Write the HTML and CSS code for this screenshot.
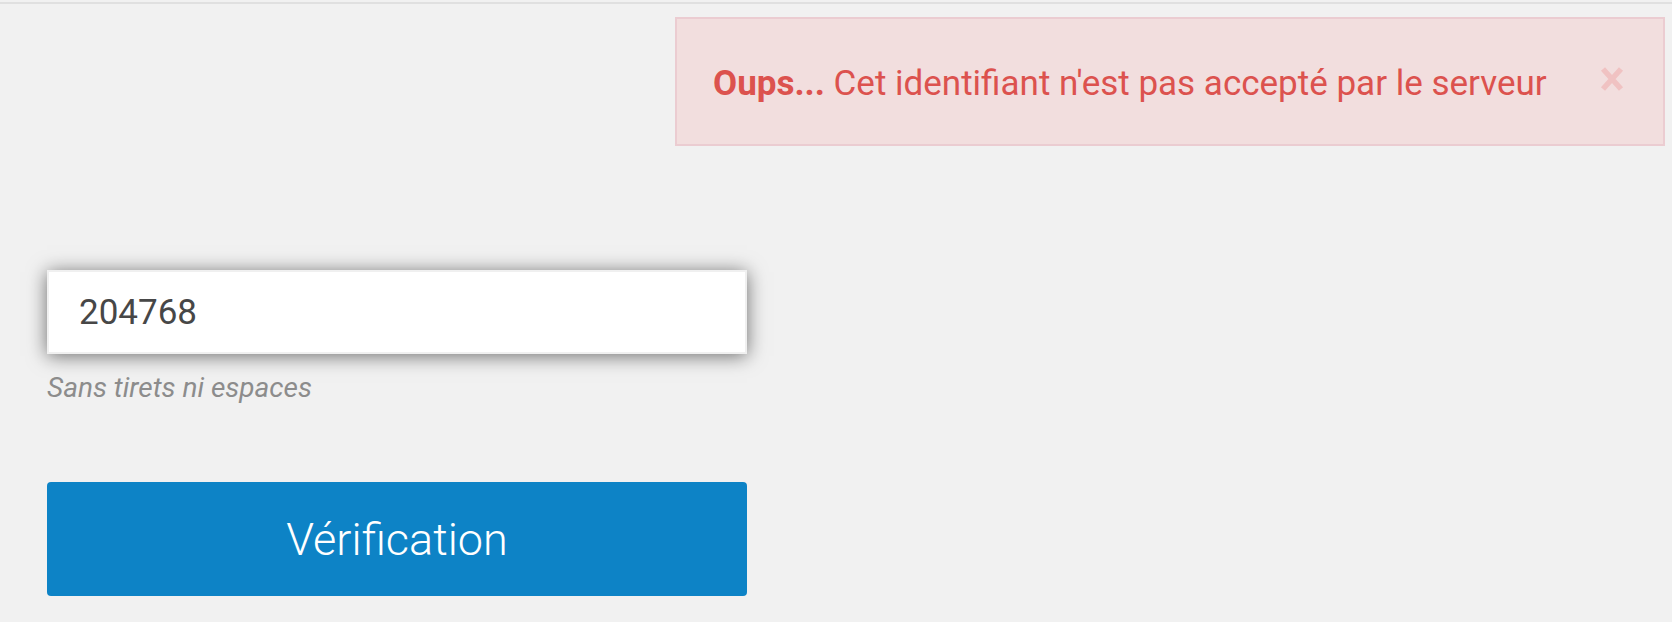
FILE: index.html
```html
<!DOCTYPE html>
<html lang="fr">
<head>
<meta charset="utf-8">
<title>Vérification</title>
<link rel="stylesheet" href="styles.css">
</head>
<body>
<div class="topline"></div>
<div class="alert-row">
  <div class="alert">
    <p class="alert-text"><strong>Oups...</strong> Cet identifiant n'est pas accepté par le serveur</p>
    <svg class="close" width="24" height="26" viewBox="0 0 24 26" aria-label="Fermer">
      <path d="M3 3 L21 23 M21 3 L3 23" stroke="currentColor" stroke-width="5.5" fill="none"/>
    </svg>
  </div>
</div>
<form class="form">
  <input class="field" type="text" value="204768">
  <p class="hint">Sans tirets ni espaces</p>
  <button class="btn" type="button">Vérification</button>
</form>
</body>
</html>
```
FILE: styles.css
```css
html, body {
  margin: 0;
  padding: 0;
  background: #f1f1f1;
  font-family: Roboto, "Liberation Sans", sans-serif;
}
body {
  padding-top: 2px;
  height: 620px;
  overflow: hidden;
}
.topline {
  height: 2px;
  background: #e0e0e0;
}
.alert-row {
  display: flex;
  justify-content: flex-end;
  padding-right: 7px;
  margin-top: 13px;
}
.alert {
  width: 990px;
  height: 129px;
  box-sizing: border-box;
  background: #f2dede;
  border: 2px solid #ebccd1;
  display: flex;
  align-items: center;
  justify-content: space-between;
  padding: 0 39px 0 36px;
}
.alert-text {
  margin: 3px 0 0 0;
  font-size: 35px;
  color: #dc524e;
}
.alert-text strong {
  font-weight: 700;
}
.close {
  display: block;
  color: #f0c2c2;
  margin-top: -6px;
}
.form {
  margin: 124px 0 0 47px;
  width: 700px;
  display: flex;
  flex-direction: column;
}
.field {
  box-sizing: border-box;
  width: 700px;
  height: 84px;
  margin: 0;
  padding: 0 0 0 30px;
  border: 2px solid #f0f0f0;
  background: #fff;
  font-family: Roboto, "Liberation Sans", sans-serif;
  font-size: 35px;
  color: #474747;
  box-shadow: 0 2px 18px rgba(0, 0, 0, 0.55);
  outline: none;
}
.hint {
  margin: 17px 0 0 0;
  font-size: 28px;
  font-style: italic;
  color: #8c8c8c;
}
.btn {
  margin-top: 78px;
  width: 700px;
  height: 114px;
  border: 0;
  border-radius: 4px;
  background: #0d83c6;
  color: #fff;
  font-family: Roboto, "Liberation Sans", sans-serif;
  font-size: 45px;
  font-weight: 300;
  padding: 0;
  cursor: pointer;
}
```
